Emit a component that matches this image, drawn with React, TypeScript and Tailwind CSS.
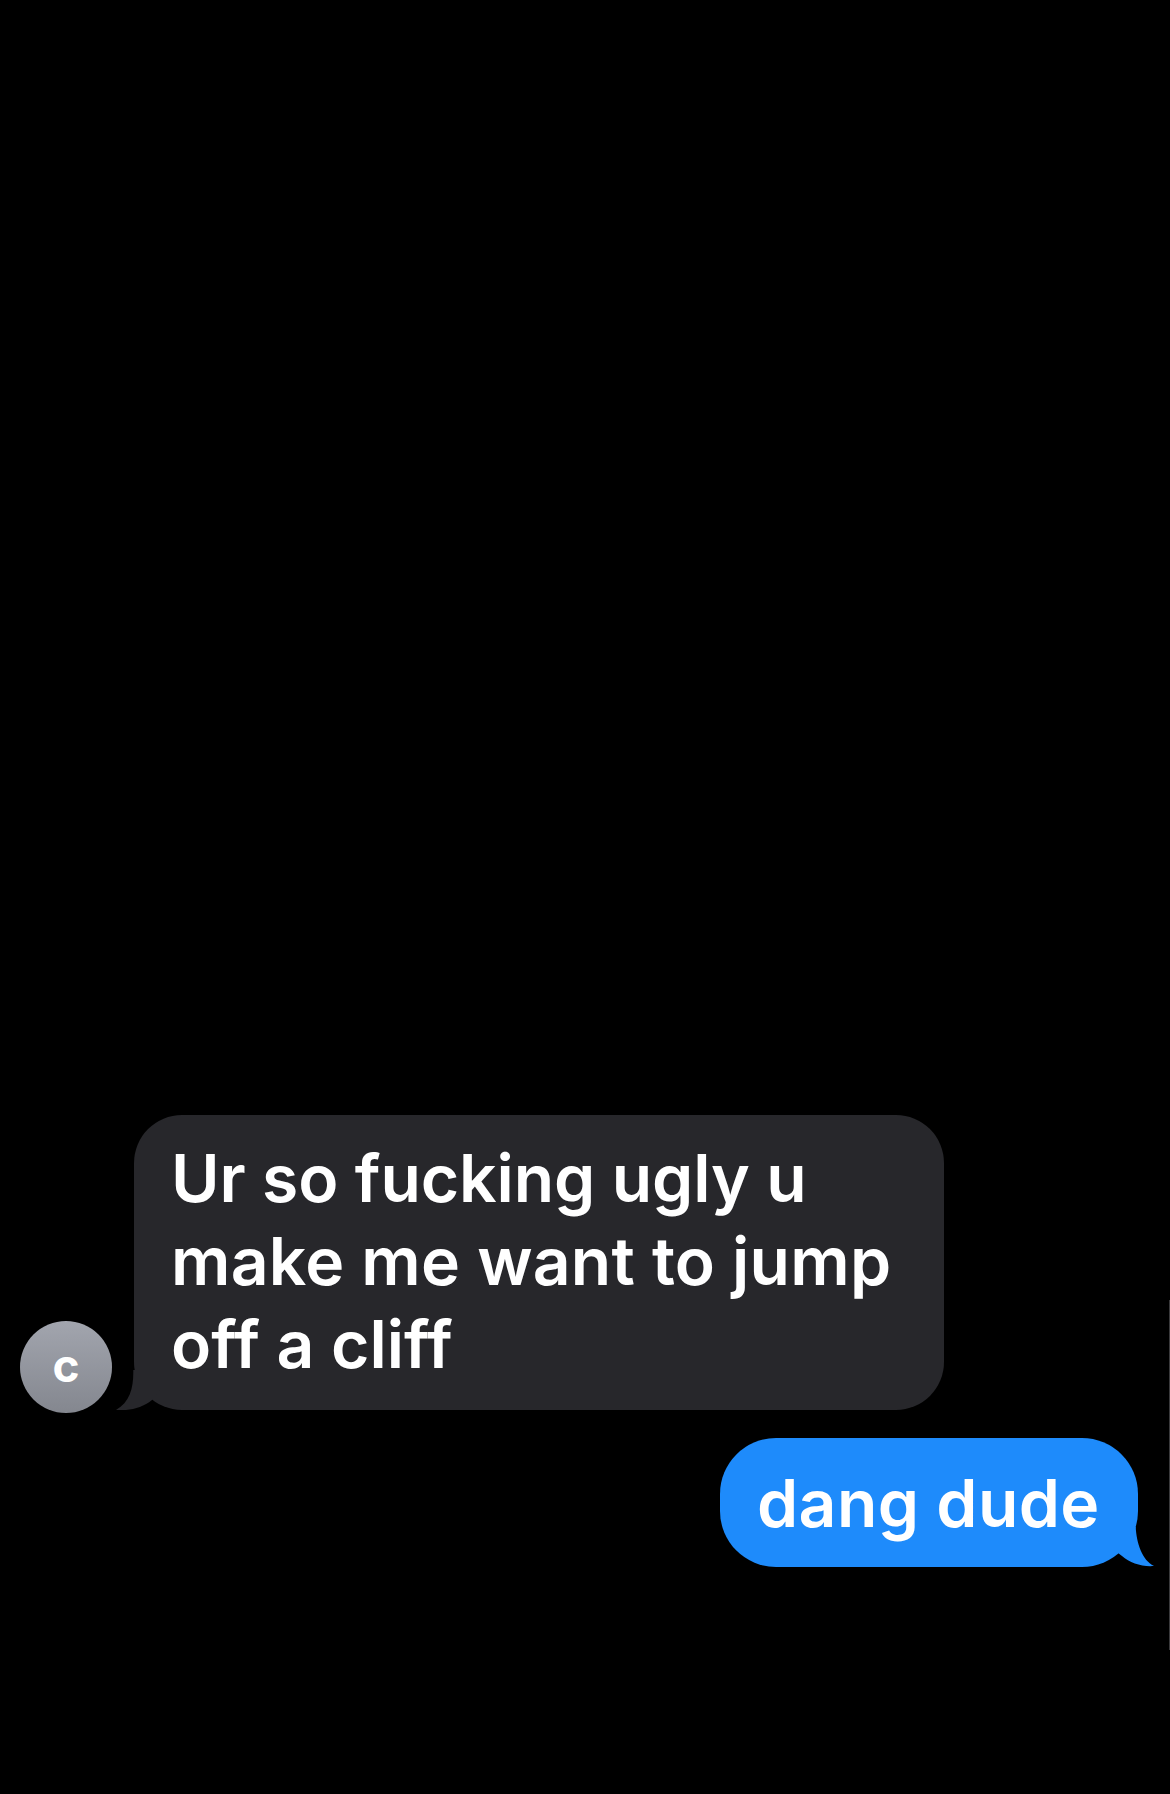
export default function App() {
  return (
    <div className="relative h-[1794px] w-[1170px] overflow-hidden bg-black pt-[1115px] font-['Inter',sans-serif] font-semibold text-white">
      <div className="flex items-end pl-[20px]">
        <div className="mb-[-3px] flex h-[92px] w-[92px] items-center justify-center rounded-full bg-gradient-to-b from-[#a2a5ae] to-[#84878f] pb-[4px] text-[46px] leading-none font-bold">
          c
        </div>
        <div className="relative ml-[22px] h-[295px] w-[810px] rounded-[48px] bg-[#27272b] pl-[37px] pt-[22px] text-[66px] leading-[83px]">
          <div className="tracking-[-0.1px]">Ur so fucking ugly u</div>
          <div className="tracking-[0.25px]">make me want to jump</div>
          <div>off a cliff</div>
          <svg className="absolute bottom-0 left-[-18px]" width="44" height="40" viewBox="0 0 44 40">
            <path d="M17.3 0 C17.6 18 14 32 0 40 C14 41 26 38 36 30 L44 20 L44 0 Z" fill="#27272b" />
          </svg>
        </div>
      </div>
      <div className="mt-[28px] flex justify-end pr-[32px]">
        <div className="relative flex h-[129px] w-[418px] items-center rounded-[56px] bg-[#1e8bfb] pl-[37px] text-[66px] leading-none tracking-[0.4px]">
          dang dude
          <svg className="absolute bottom-0 right-[-16px]" width="44" height="40" viewBox="0 0 44 40">
            <path d="M25.7 0 C26.5 16 32 33 44 39 C32 40 20 36 12 29 L0 20 L0 0 Z" fill="#1e8bfb" />
          </svg>
        </div>
      </div>
      <div className="absolute right-0 top-[1300px] h-[350px] w-[1px] bg-[#3a3a3c]" />
    </div>
  );
}
